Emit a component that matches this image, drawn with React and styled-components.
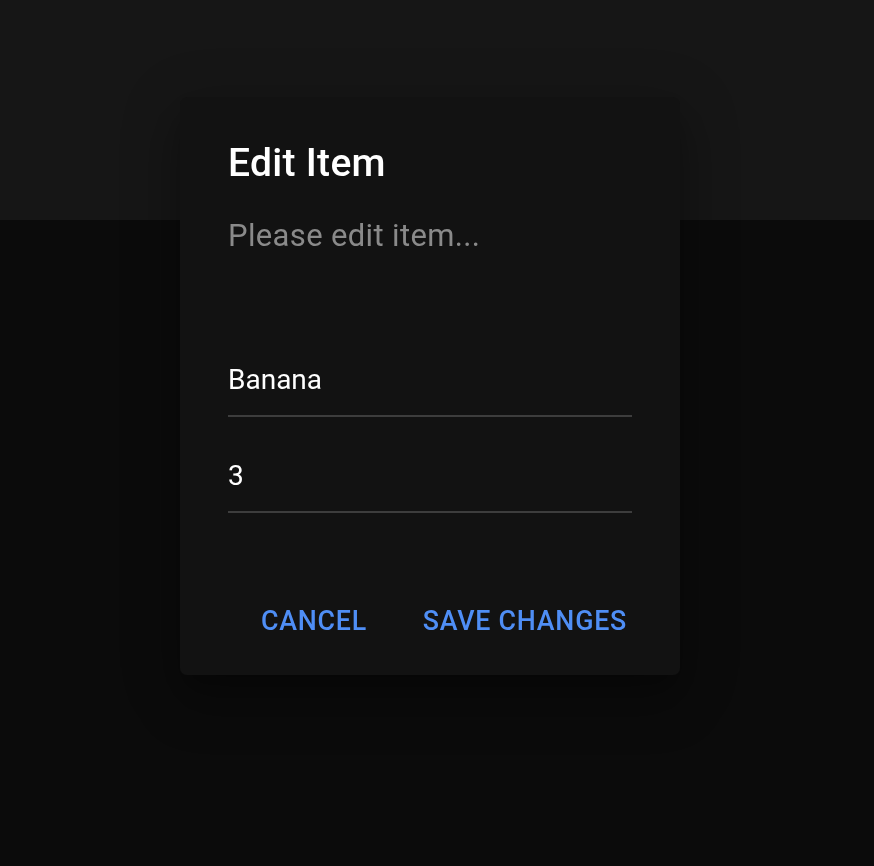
import React, { useState } from "react";
import styled, { createGlobalStyle } from "styled-components";

const GlobalStyle = createGlobalStyle`
  html, body {
    margin: 0;
    padding: 0;
    background: #0b0b0b;
    font-family: Roboto, "Noto Sans", "Liberation Sans", sans-serif;
  }
`;

const Page = styled.div`
  min-height: 100vh;
  background: #0b0b0b;
`;

const TopBar = styled.header`
  height: 220px;
  background: #161616;
`;

const Backdrop = styled.div`
  position: fixed;
  inset: 0;
  display: flex;
  align-items: flex-start;
  justify-content: flex-start;
  padding: 97px 0 0 180px;
`;

const Dialog = styled.div`
  width: 500px;
  background: #121212;
  border-radius: 7px;
  box-shadow: 0 14px 20px -9px rgba(0, 0, 0, 0.25),
    0 30px 48px 4px rgba(0, 0, 0, 0.18), 0 12px 56px 10px rgba(0, 0, 0, 0.14);
  display: flex;
  flex-direction: column;
  padding: 36px 48px 20px;
  box-sizing: border-box;
`;

const Title = styled.h2`
  margin: 0;
  font-size: 39px;
  font-weight: 500;
  line-height: 60px;
  letter-spacing: 0.3px;
  color: #ffffff;
`;

const Subtitle = styled.p`
  margin: 20px 0 63px;
  font-size: 31px;
  line-height: 45px;
  letter-spacing: 0.35px;
  color: #8a8a8a;
`;

const Field = styled.label`
  display: block;
  padding: 41px 0 0;
  border-bottom: 2px solid #3d3d3d;
`;

const Input = styled.input`
  display: block;
  width: 100%;
  box-sizing: border-box;
  padding: 0 0 19px;
  border: none;
  outline: none;
  background: transparent;
  font-family: inherit;
  font-size: 28px;
  line-height: 34px;
  height: 53px;
  color: #ffffff;
`;

const Actions = styled.div`
  display: flex;
  justify-content: flex-end;
  gap: 26px;
  margin: 75px -10px 0 0;
`;

const TextButton = styled.button`
  border: none;
  background: none;
  cursor: pointer;
  padding: 11px 15px;
  font-family: inherit;
  font-size: 26.8px;
  font-weight: 500;
  line-height: 45px;
  letter-spacing: 0.75px;
  text-transform: uppercase;
  color: #4f8ef5;
  border-radius: 7px;
`;

export default function App() {
  const [name, setName] = useState("Banana");
  const [qty, setQty] = useState("3");

  return (
    <Page>
      <GlobalStyle />
      <TopBar />
      <Backdrop>
        <Dialog role="dialog">
          <Title>Edit Item</Title>
          <Subtitle>Please edit item...</Subtitle>
          <Field>
            <Input value={name} onChange={(e) => setName(e.target.value)} />
          </Field>
          <Field>
            <Input value={qty} onChange={(e) => setQty(e.target.value)} />
          </Field>
          <Actions>
            <TextButton>Cancel</TextButton>
            <TextButton>Save Changes</TextButton>
          </Actions>
        </Dialog>
      </Backdrop>
    </Page>
  );
}
